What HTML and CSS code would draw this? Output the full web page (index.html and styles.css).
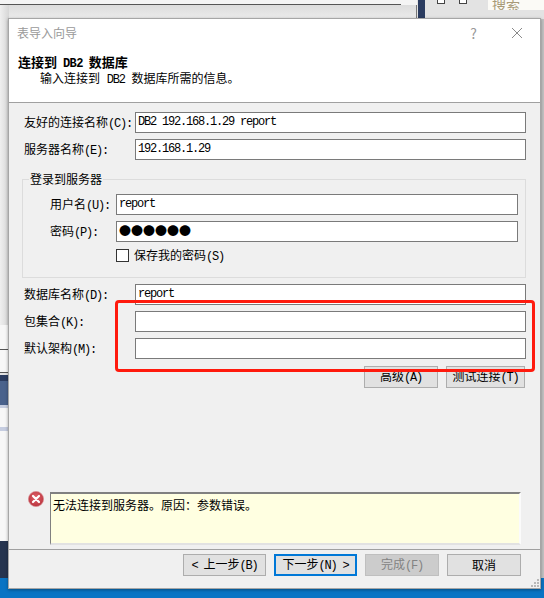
FILE: index.html
```html
<!DOCTYPE html>
<html lang="zh-CN">

<head>
  <meta charset="UTF-8">
  <title>表导入向导</title>
  <link rel="stylesheet" href="styles.css">
</head>

<body>
  <div class="desktop">
    <!-- window behind the dialog -->
    <div class="back back-top"></div>
    <div class="back back-line"></div>
    <div class="back back-toolbar"></div>
    <div class="back back-edge"></div>
    <div class="back back-navy"></div>
    <div class="back back-tool tool-one"></div>
    <div class="back back-tool tool-two"></div>
    <div class="back back-search">搜索</div>
    <div class="back back-pane"></div>
    <div class="back back-row row-one"></div>
    <div class="back back-row row-two"></div>
    <div class="back back-row row-three"></div>
    <div class="back back-row row-four"></div>
    <div class="back back-row row-five"></div>
    <div class="back back-row row-six"></div>
    <div class="back back-row row-seven"></div>
    <div class="back back-right"></div>
    <div class="back back-task"></div>

    <div class="dialog">
      <div class="head">
        <div class="titlebar">
          <span class="title">表导入向导</span>
          <span class="help">?</span>
          <svg class="close" width="12" height="12" viewBox="0 0 12 12">
            <path d="M1 1L11 11M11 1L1 11" stroke="#8a8a8a" stroke-width="1" fill="none" />
          </svg>
        </div>
        <div class="heading">连接到 <span class="m">DB2</span> 数据库</div>
        <div class="subheading">输入连接到 <span class="m">DB2</span> 数据库所需的信息。</div>
      </div>

      <div class="body">
        <div class="row">
          <label>友好的连接名称<span class="m">(C):</span></label>
          <div class="field m">DB2 192.168.1.29 report</div>
        </div>
        <div class="row">
          <label>服务器名称<span class="m">(E):</span></label>
          <div class="field m">192.168.1.29</div>
        </div>

        <fieldset class="login">
          <legend>登录到服务器</legend>
          <div class="row row-inner">
            <label>用户名<span class="m">(U):</span></label>
            <div class="field m">report</div>
          </div>
          <div class="row row-inner">
            <label>密码<span class="m">(P):</span></label>
            <div class="field dots">●●●●●●</div>
          </div>
          <div class="save">
            <span class="checkbox"></span>
            <span>保存我的密码<span class="m">(S)</span></span>
          </div>
        </fieldset>

        <div class="row">
          <label>数据库名称<span class="m">(D):</span></label>
          <div class="field m">report</div>
        </div>
        <div class="row">
          <label>包集合<span class="m">(K):</span></label>
          <div class="field"></div>
        </div>
        <div class="row">
          <label>默认架构<span class="m">(M):</span></label>
          <div class="field"></div>
        </div>

        <div class="tools">
          <button class="btn btn-advanced">高级<span class="m">(A)</span></button>
          <button class="btn btn-test">测试连接<span class="m">(T)</span></button>
        </div>

        <div class="message">
          <svg class="error-icon" width="16" height="16" viewBox="0 0 16 16">
            <defs>
              <radialGradient id="errorFill" cx="50%" cy="40%" r="60%">
                <stop offset="0%" stop-color="#e2636b" />
                <stop offset="100%" stop-color="#b8333d" />
              </radialGradient>
            </defs>
            <circle cx="8" cy="8" r="7.6" fill="url(#errorFill)" stroke="#d98a8f" stroke-width="0.7" />
            <path d="M5 5L11 11M11 5L5 11" stroke="#fff" stroke-width="2.2" stroke-linecap="round" fill="none" />
          </svg>
          <div class="message-box">无法连接到服务器。原因：参数错误。</div>
        </div>
      </div>

      <div class="foot">
        <button class="btn btn-step"><span class="m">&lt; </span>上一步<span class="m">(B)</span></button>
        <button class="btn btn-step btn-default">下一步<span class="m">(N) &gt;</span></button>
        <button class="btn btn-step btn-disabled">完成<span class="m">(F)</span></button>
        <button class="btn btn-step">取消</button>
        <svg class="grip" width="9" height="9" viewBox="0 0 9 9" fill="#b8b8b8">
          <rect x="6" y="0" width="2" height="2" />
          <rect x="3" y="3" width="2" height="2" />
          <rect x="6" y="3" width="2" height="2" />
          <rect x="0" y="6" width="2" height="2" />
          <rect x="3" y="6" width="2" height="2" />
          <rect x="6" y="6" width="2" height="2" />
        </svg>
      </div>
    </div>

    <div class="callout"></div>
  </div>
</body>

</html>
```

FILE: styles.css
```css
* {
  box-sizing: border-box;
}

html,
body {
  margin: 0;
  height: 100%;
}

body {
  font-family: "Noto Sans CJK SC", sans-serif;
  font-size: 12px;
  line-height: 16px;
  color: #000;
  overflow: hidden;
}

/* latin text sits at half the width of the cjk text */
.m {
  font-family: "Liberation Mono", monospace;
  font-size: 12px;
  letter-spacing: -1.2px;
}

.desktop {
  position: relative;
  width: 544px;
  height: 598px;
  background: #e3e3e3;
  overflow: hidden;
}

/* window behind the dialog */
.back {
  position: absolute;
}

.back-top {
  left: 0;
  top: 0;
  width: 417px;
  height: 5px;
  background: #f4f4f4;
}

.back-line {
  left: 0;
  top: 4px;
  width: 401px;
  height: 1px;
  background: #555;
}

.back-toolbar {
  left: 0;
  top: 5px;
  width: 417px;
  height: 14px;
  background: linear-gradient(#dcdcdc, #ececec);
  border-right: 1px solid #777;
}

.back-edge {
  left: 0;
  top: 5px;
  width: 9px;
  height: 320px;
  background: linear-gradient(90deg, #efefef, #d6d6d6);
}

.back-navy {
  left: 418px;
  top: 0;
  width: 7px;
  height: 19px;
  background: #2b3c60;
}

.back-pane {
  left: 425px;
  top: 0;
  width: 119px;
  height: 19px;
  background: linear-gradient(#dfe4ee, #cfd6e4);
  z-index: -1;
}

.back-tool {
  top: 0;
  width: 8px;
  height: 4px;
  background: #fff;
  border: 1px solid #444;
  border-top: 0;
}

.tool-one {
  left: 437px;
}

.tool-two {
  left: 459px;
}

.back-search {
  left: 488px;
  top: 0;
  width: 56px;
  height: 10px;
  padding-left: 4px;
  background: #fbfaf6;
  color: #a89a78;
  font-size: 14px;
  line-height: 8px;
  overflow: hidden;
}

.back-row {
  left: 0;
  width: 9px;
}

.row-one {
  top: 325px;
  height: 24px;
  background: #f7f7f7;
}

.row-two {
  top: 349px;
  height: 24px;
  background: #f7f7f7;
  border-top: 1px solid #555;
  border-bottom: 1px solid #555;
}

.row-three {
  top: 375px;
  height: 6px;
  background: #2b3c60;
}

.row-four {
  top: 381px;
  height: 27px;
  background: linear-gradient(#4a628c, #4a628c 89%, #c6cde0 89%);
}

.row-five {
  top: 408px;
  height: 19px;
  background: #f7f7f7;
}

.row-six {
  top: 427px;
  height: 114px;
  background: linear-gradient(#c6cde0, #c6cde0 4px, #f7f7f7 4px);
}

.row-seven {
  top: 541px;
  height: 37px;
  background: #26344f;
}

.back-right {
  left: 541px;
  top: 19px;
  width: 3px;
  height: 559px;
  background: #c2c2c2;
}

.back-task {
  left: 0;
  top: 578px;
  width: 544px;
  height: 20px;
  background: #0a74c4;
}

/* dialog */
.dialog {
  position: absolute;
  left: 8px;
  top: 18px;
  width: 533px;
  height: 571px;
  display: flex;
  flex-direction: column;
  background: #f0f0f0;
  border: 1px solid #a6a6a6;
  box-shadow: 0 1px 3px rgba(0, 0, 0, 0.35);
}

.head {
  height: 84px;
  padding: 6px 8px 0;
  background: #fff;
  border-bottom: 1px solid #a0a0a0;
}

.titlebar {
  display: flex;
  align-items: center;
  height: 16px;
}

.title {
  flex: 1;
  color: #9a9a9a;
}

.help {
  margin-right: 34px;
  color: #999;
  font-size: 14px;
}

.close {
  margin-right: 9px;
}

.heading {
  margin: 14px 0 0 1px;
  font-size: 13px;
  font-weight: bold;
  line-height: 14px;
  word-spacing: 3px;
}

.heading .m {
  font-weight: bold;
  letter-spacing: -0.6px;
}

.subheading {
  margin-left: 23px;
  line-height: 14px;
  word-spacing: 4px;
}

.body {
  flex: 1;
  display: flex;
  flex-direction: column;
  gap: 6px;
  padding: 9px 14px 4px 15px;
}

.row {
  display: grid;
  grid-template-columns: 111px 1fr;
  align-items: center;
}

.row-inner {
  grid-template-columns: 66px 1fr;
}

.field {
  height: 21px;
  padding-left: 2px;
  background: #fff;
  border: 1px solid #7a7a7a;
  line-height: 18px;
  white-space: pre;
}

.dots {
  font-size: 12px;
  line-height: 18px;
}

.login {
  display: flex;
  flex-direction: column;
  gap: 6px;
  min-width: 0;
  margin: 5px 0 0 -2px;
  padding: 7px 7px 15px 27px;
  border: 1px solid #dcdcdc;
}

.login legend {
  padding: 0 1px;
  margin-left: -21px;
  line-height: 16px;
}

.save {
  display: flex;
  align-items: center;
  gap: 5px;
  height: 13px;
  margin: 1px 0 0 66px;
}

.checkbox {
  width: 13px;
  height: 13px;
  background: #fff;
  border: 1px solid #333;
}

.tools {
  display: flex;
  justify-content: flex-end;
  gap: 8px;
  margin-top: 1px;
  padding-right: 1px;
}

.btn {
  height: 22px;
  padding: 0;
  font-family: inherit;
  font-size: 12px;
  line-height: 16px;
  color: #000;
  background: #e1e1e1;
  border: 1px solid #adadad;
  white-space: pre;
}

.btn-advanced {
  width: 74px;
}

.btn-test {
  width: 79px;
}

.message {
  display: flex;
  gap: 6px;
  margin-top: auto;
  padding: 0 5px 0 4px;
}

.error-icon {
  flex: none;
  margin-top: -1px;
}

.message-box {
  flex: 1;
  height: 53px;
  padding: 3px 2px;
  background: #ffffe1;
  border: 1px solid;
  border-width: 2px 2px 2px 1px;
  border-color: #808080 #fbfbfb #e2e2e2 #808080;
  white-space: pre;
}

.foot {
  position: relative;
  height: 39px;
  display: flex;
  justify-content: flex-end;
  gap: 8px;
  padding: 4px 19px 0 0;
  border-top: 1px solid #a0a0a0;
}

.btn-step {
  width: 74px;
}

.btn-step:first-child {
  width: 83px;
  margin-right: 0;
}

.btn-default {
  width: 83px;
  border: 2px solid #0078d7;
}

.btn-disabled {
  color: #838383;
  background: #cccccc;
  border-color: #bfbfbf;
}

.grip {
  position: absolute;
  right: 0;
  bottom: 0;
}

/* red annotation drawn over the screenshot */
.callout {
  position: absolute;
  left: 115px;
  top: 300px;
  width: 420px;
  height: 72px;
  border: 3px solid #ff1a0d;
  border-radius: 4px;
}
```
